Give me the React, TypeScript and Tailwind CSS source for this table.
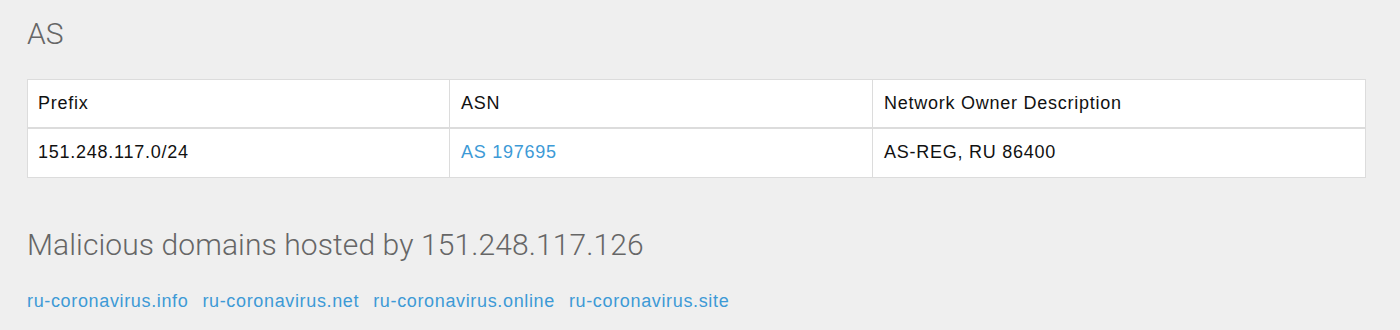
const domains = [
  "ru-coronavirus.info",
  "ru-coronavirus.net",
  "ru-coronavirus.online",
  "ru-coronavirus.site",
];

export default function App() {
  return (
    <div
      className="min-h-[330px] w-[1400px] bg-[#efefef] px-[27px] pt-[16px]"
      style={{ fontFamily: '"Liberation Sans", Arial, sans-serif' }}
    >
      <h2
        className="text-[30px] font-light leading-[35px] tracking-[0.1px] text-[#666]"
        style={{ fontFamily: 'Roboto, "Liberation Sans", sans-serif' }}
      >
        AS
      </h2>

      <table className="mt-[28px] w-[1338px] table-fixed border-collapse border border-[#dcdcdc] bg-white text-[18px] tracking-[0.75px] text-[#111]">
        <colgroup>
          <col className="w-[422px]" />
          <col className="w-[423px]" />
          <col className="w-[493px]" />
        </colgroup>
        <thead>
          <tr className="h-[48px] border-b-2 border-[#dcdcdc]">
            <th className="border-r border-[#dcdcdc] px-[10px] text-left font-normal">Prefix</th>
            <th className="border-r border-[#dcdcdc] px-[11px] text-left font-normal">ASN</th>
            <th className="px-[11px] text-left font-normal">Network Owner Description</th>
          </tr>
        </thead>
        <tbody>
          <tr className="h-[50px]">
            <td className="border-r border-[#dcdcdc] px-[10px]">151.248.117.0/24</td>
            <td className="border-r border-[#dcdcdc] px-[11px]">
              <a href="#" className="text-[#3d9ad6]">
                AS 197695
              </a>
            </td>
            <td className="px-[11px]">AS-REG, RU 86400</td>
          </tr>
        </tbody>
      </table>

      <h2
        className="mt-[49px] text-[30px] font-light leading-[35px] tracking-[0.1px] text-[#666]"
        style={{ fontFamily: 'Roboto, "Liberation Sans", sans-serif' }}
      >
        Malicious domains hosted by 151.248.117.126
      </h2>

      <div className="mt-[27px] flex gap-[14px] text-[18px] leading-[24px] tracking-[0.65px]">
        {domains.map((d) => (
          <a key={d} href="#" className="text-[#3d9ad6]">
            {d}
          </a>
        ))}
      </div>
    </div>
  );
}
